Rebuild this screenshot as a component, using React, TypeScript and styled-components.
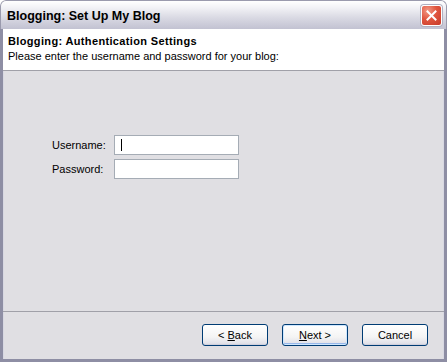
import React from 'react';
import styled, {createGlobalStyle} from 'styled-components';

const GlobalStyle = createGlobalStyle`
    html, body {
        margin: 0;
        padding: 0;
        background: #ffffff;
    }
    body {
        font-family: Tahoma, "Liberation Sans", "DejaVu Sans", sans-serif;
        font-size: 11px;
        color: #000000;
    }
`;

const Window = styled.div`
    width: 447px;
    height: 362px;
    display: flex;
    flex-direction: column;
    box-sizing: border-box;
    background: #e0dfe3;
    border-radius: 6px 6px 0 0;
    overflow: hidden;
`;

const TitleBar = styled.div`
    height: 29px;
    flex: none;
    display: flex;
    align-items: center;
    justify-content: space-between;
    padding: 0 4px 0 6px;
    background: linear-gradient(to bottom, #ffffff 0%, #f1f1f5 25%, #d9d9e3 60%, #c2c2d2 100%);
    border: 1px solid #9a9aad;
    border-bottom: none;
    border-radius: 6px 6px 0 0;
    box-sizing: border-box;
`;

const Caption = styled.span`
    font-family: "Liberation Sans", sans-serif;
    font-weight: bold;
    font-size: 12.5px;
    color: #000000;
    padding-top: 2px;
`;

const CloseButton = styled.div`
    width: 21px;
    height: 21px;
    margin-top: 1px;
    box-sizing: border-box;
    border: 1px solid #ffffff;
    border-radius: 3px;
    background: radial-gradient(circle at 30% 25%, #f29a86 0%, #e0563f 45%, #c83a2a 100%);
    display: flex;
    align-items: center;
    justify-content: center;
    box-shadow: 0 0 0 1px #b0b0c0;
`;

const Frame = styled.div`
    flex: 1;
    display: flex;
    flex-direction: column;
    border-left: 3px solid #8e8ea4;
    border-right: 3px solid #8e8ea4;
    border-bottom: 3px solid #8e8ea4;
    box-shadow: inset 1px 0 0 #d8d8e2, inset -1px 0 0 #d8d8e2;
`;

const Header = styled.div`
    height: 42px;
    flex: none;
    background: #ffffff;
    border-bottom: 1px solid #a0a0a8;
    padding: 6px 0 0 5px;
    box-sizing: border-box;
    display: flex;
    flex-direction: column;
    gap: 3px;
`;

const HeaderTitle = styled.div`
    font-weight: bold;
    font-size: 11px;
    letter-spacing: 0.35px;
`;

const HeaderText = styled.div`
    font-size: 11px;
`;

const Body = styled.div`
    flex: 1;
    padding: 64px 0 0 49px;
    border-bottom: 1px solid #a0a0a8;
`;

const Form = styled.div`
    display: grid;
    grid-template-columns: 62px 125px;
    row-gap: 4px;
    align-items: center;
`;

const Label = styled.label`
    font-size: 11px;
`;

const Input = styled.div<{ $caret?: boolean }>`
    height: 20px;
    box-sizing: border-box;
    background: #ffffff;
    border: 1px solid #a5acb5;
    position: relative;

    &::after {
        content: '';
        display: ${p => (p.$caret ? 'block' : 'none')};
        position: absolute;
        left: 6px;
        top: 3px;
        width: 1px;
        height: 12px;
        background: #000000;
    }
`;

const Footer = styled.div`
    height: 47px;
    flex: none;
    display: flex;
    justify-content: flex-end;
    align-items: flex-start;
    padding: 12px 16px 0 0;
    box-sizing: border-box;
    gap: 14px;
`;

const Button = styled.button<{ $default?: boolean }>`
    width: 66px;
    height: 22px;
    padding: 0;
    font-family: inherit;
    font-size: 11px;
    color: #000000;
    border: 1px solid #003c74;
    border-radius: 3px;
    background: linear-gradient(to bottom, #ffffff 0%, #f4f4f4 60%, #e3e3ea 90%, #d6d6e0 100%);
    box-shadow: ${p => (p.$default
        ? 'inset 0 0 0 1px #cee7ff, inset 0 -1px 0 1px #98b8ea'
        : 'inset 0 -1px 0 #d0d0dc')};
`;

const Key = styled.span`
    text-decoration: underline;
`;

function App() {
    return (
        <>
            <GlobalStyle/>
            <Window>
                <TitleBar>
                    <Caption>Blogging: Set Up My Blog</Caption>
                    <CloseButton>
                        <svg width="11" height="11" viewBox="0 0 11 11">
                            <path d="M1.5 1.5 L9.5 9.5 M9.5 1.5 L1.5 9.5" stroke="#ffffff" strokeWidth="2" strokeLinecap="square"/>
                        </svg>
                    </CloseButton>
                </TitleBar>
                <Frame>
                    <Header>
                        <HeaderTitle>Blogging: Authentication Settings</HeaderTitle>
                        <HeaderText>Please enter the username and password for your blog:</HeaderText>
                    </Header>
                    <Body>
                        <Form>
                            <Label>Username:</Label>
                            <Input $caret/>
                            <Label>Password:</Label>
                            <Input/>
                        </Form>
                    </Body>
                    <Footer>
                        <Button>&lt; <Key>B</Key>ack</Button>
                        <Button $default><Key>N</Key>ext &gt;</Button>
                        <Button>Cancel</Button>
                    </Footer>
                </Frame>
            </Window>
        </>
    );
}

export default App;
